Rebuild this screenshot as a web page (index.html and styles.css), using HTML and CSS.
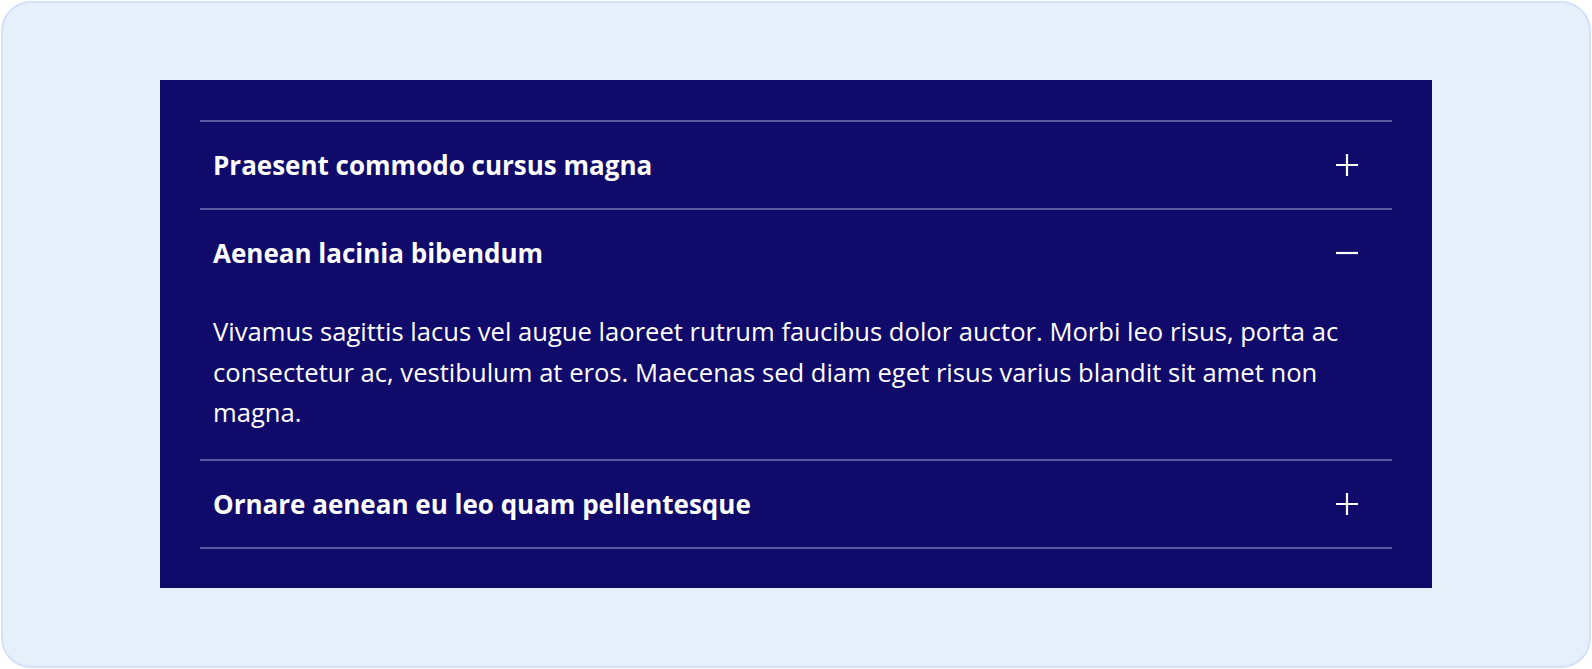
FILE: index.html
```html
<!DOCTYPE html>
<html lang="en">
  <head>
    <meta charset="UTF-8" />
    <meta name="viewport" content="width=device-width, initial-scale=1.0" />
    <title>FAQ Accordion</title>
    <link rel="stylesheet" href="styles.css">
  </head>
  <body>
    <div class="frame">
      <section class="accordion">
        <details class="item">
          <summary class="item-header">
            <span class="item-title">Praesent commodo cursus magna</span>
            <span class="toggle">
              <svg class="icon-plus" width="22" height="22" viewBox="0 0 22 22">
                <path d="M11 0v22M0 11h22" />
              </svg>
              <svg class="icon-minus" width="22" height="22" viewBox="0 0 22 22">
                <path d="M0 11h22" />
              </svg>
            </span>
          </summary>
          <div class="item-body">
            <p>Cras mattis consectetur purus sit amet fermentum. Donec ullamcorper nulla non metus auctor fringilla.</p>
          </div>
        </details>

        <details class="item" open>
          <summary class="item-header">
            <span class="item-title">Aenean lacinia bibendum</span>
            <span class="toggle">
              <svg class="icon-plus" width="22" height="22" viewBox="0 0 22 22">
                <path d="M11 0v22M0 11h22" />
              </svg>
              <svg class="icon-minus" width="22" height="22" viewBox="0 0 22 22">
                <path d="M0 11h22" />
              </svg>
            </span>
          </summary>
          <div class="item-body">
            <p>Vivamus sagittis lacus vel augue laoreet rutrum faucibus dolor auctor. Morbi leo risus, porta ac consectetur ac, vestibulum at eros. Maecenas sed diam eget risus varius blandit sit amet non magna.</p>
          </div>
        </details>

        <details class="item">
          <summary class="item-header">
            <span class="item-title">Ornare aenean eu leo quam pellentesque</span>
            <span class="toggle">
              <svg class="icon-plus" width="22" height="22" viewBox="0 0 22 22">
                <path d="M11 0v22M0 11h22" />
              </svg>
              <svg class="icon-minus" width="22" height="22" viewBox="0 0 22 22">
                <path d="M0 11h22" />
              </svg>
            </span>
          </summary>
          <div class="item-body">
            <p>Nullam quis risus eget urna mollis ornare vel eu leo. Etiam porta sem malesuada magna mollis euismod.</p>
          </div>
        </details>
      </section>
    </div>
  </body>
</html>
```

FILE: styles.css
```css
* {
  box-sizing: border-box;
}
body {
  font-family: "Open Sans", "Liberation Sans", sans-serif;
  margin: 0;
  padding: 1px;
  background-color: #ffffff;
}
.frame {
  height: 667px;
  padding: 77px 157px;
  background-color: #e6f0fb;
  border: 2px solid #d2e3f8;
  border-radius: 30px;
}
.accordion {
  background-color: #100a6b;
  padding: 40px 40px 39px;
  color: #ffffff;
}
.item {
  border-top: 2px solid #5a56a0;
}
.item:last-child {
  border-bottom: 2px solid #5a56a0;
}
.item-header {
  display: flex;
  align-items: center;
  justify-content: space-between;
  height: 86px;
  padding: 0 34px 0 13px;
  list-style: none;
  cursor: pointer;
}
.item-header::-webkit-details-marker {
  display: none;
}
.item-title {
  font-size: 26px;
  font-weight: 700;
  line-height: 36px;
}
.toggle {
  display: flex;
}
.toggle svg {
  stroke: #ffffff;
  stroke-width: 2.2;
  fill: none;
}
.icon-minus {
  display: none;
}
.item[open] .icon-plus {
  display: none;
}
.item[open] .icon-minus {
  display: block;
}
.item-body {
  display: none;
  padding: 16px 13px 25px;
}
.item[open] .item-body {
  display: block;
}
.item-body p {
  margin: 0;
  font-size: 25.6px;
  line-height: 40.5px;
}
```
